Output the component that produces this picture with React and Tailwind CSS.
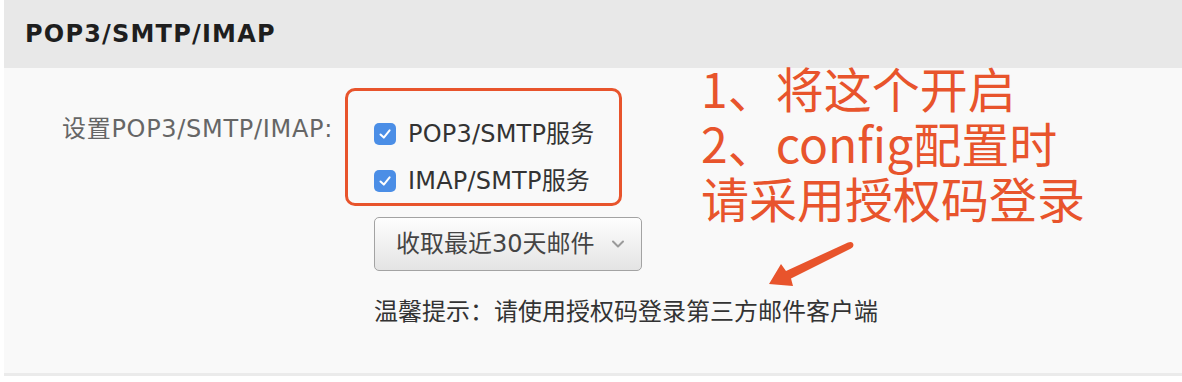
import React from 'react';

const baseFont = { fontFamily: '"DejaVu Sans", "Noto Sans CJK SC", sans-serif' };

const Check = () => (
  <span className="w-[22px] h-[22px] rounded-[5px] bg-[#4b8ee6] flex items-center justify-center shrink-0">
    <svg width="14" height="14" viewBox="0 0 14 14" fill="none">
      <path d="M2.5 7.5 L5.8 10.6 L11.6 3.4" stroke="#fff" strokeWidth="2" strokeLinecap="round" strokeLinejoin="round" />
    </svg>
  </span>
);

const App = () => {
  const services = ['POP3/SMTP服务', 'IMAP/SMTP服务'];

  return (
    <div className="bg-white pl-1 h-[382px] overflow-hidden" style={baseFont}>
      {/* Section title */}
      <div className="h-[68px] bg-[#e8e8e8] flex items-center pl-[21px]">
        <h2 className="text-[24px] font-bold text-[#1e1e1e] leading-[30px] tracking-[1.2px]">POP3/SMTP/IMAP</h2>
      </div>

      {/* Settings body */}
      <div className="relative bg-[#f9f9f9] h-[308px] border-b-[3px] border-[#ebebeb] flex">
        <div className="w-[329px] text-right pt-[46px] text-[24px] leading-[30px] text-[#666] tracking-[0.7px]">
          设置POP3/SMTP/IMAP:
        </div>

        <div className="ml-[12px] flex flex-col">
          <div className="mt-[20px] w-[277px] h-[118px] border-[3px] border-[#e8542c] rounded-[10px] pl-[26px] pt-[28px] flex flex-col gap-[17px]">
            {services.map((s) => (
              <label key={s} className="flex items-center gap-[12px] h-[30px] text-[24px] leading-[30px] text-[#333] tracking-[0.2px]">
                <Check />
                {s}
              </label>
            ))}
          </div>

          <button className="mt-[11px] ml-[29px] w-[268px] h-[54px] border border-[#a3a3a3] rounded-[5px] bg-gradient-to-b from-[#fefefe] to-[#e4e4e4] flex items-center pl-[21px] gap-[16px] text-[24px] leading-[30px] text-[#444]">
            收取最近30天邮件
            <svg width="14" height="10" viewBox="0 0 14 10" fill="none">
              <path d="M2 2.5 L7 7.5 L12 2.5" stroke="#9a9a9a" strokeWidth="2" strokeLinecap="round" strokeLinejoin="round" />
            </svg>
          </button>

          <p className="mt-[26px] ml-[29px] text-[24px] leading-[30px] text-[#333]">
            温馨提示：请使用授权码登录第三方邮件客户端
          </p>
        </div>

        {/* Annotation overlay */}
        <div
          className="absolute left-[697px] top-[-8px] text-[48px] text-[#e8542c]"
          style={{ fontFamily: '"Noto Sans CJK SC", sans-serif' }}
        >
          <div className="h-[55px] leading-[55px]">1、将这个开启</div>
          <div className="h-[55px] leading-[55px]">2、config配置时</div>
          <div className="h-[55px] leading-[55px]">请采用授权码登录</div>
        </div>
        <svg className="absolute left-[760px] top-[170px]" width="95" height="55" viewBox="0 0 95 55">
          <path
            d="M5 46 L17 26 L22 33 L84 4.5 Q89 3 89.5 7 Q89.5 9.5 87 10.5 L27 40.5 L29 48 Z"
            fill="#e8542c"
          />
        </svg>
      </div>
    </div>
  );
};

export default App;
